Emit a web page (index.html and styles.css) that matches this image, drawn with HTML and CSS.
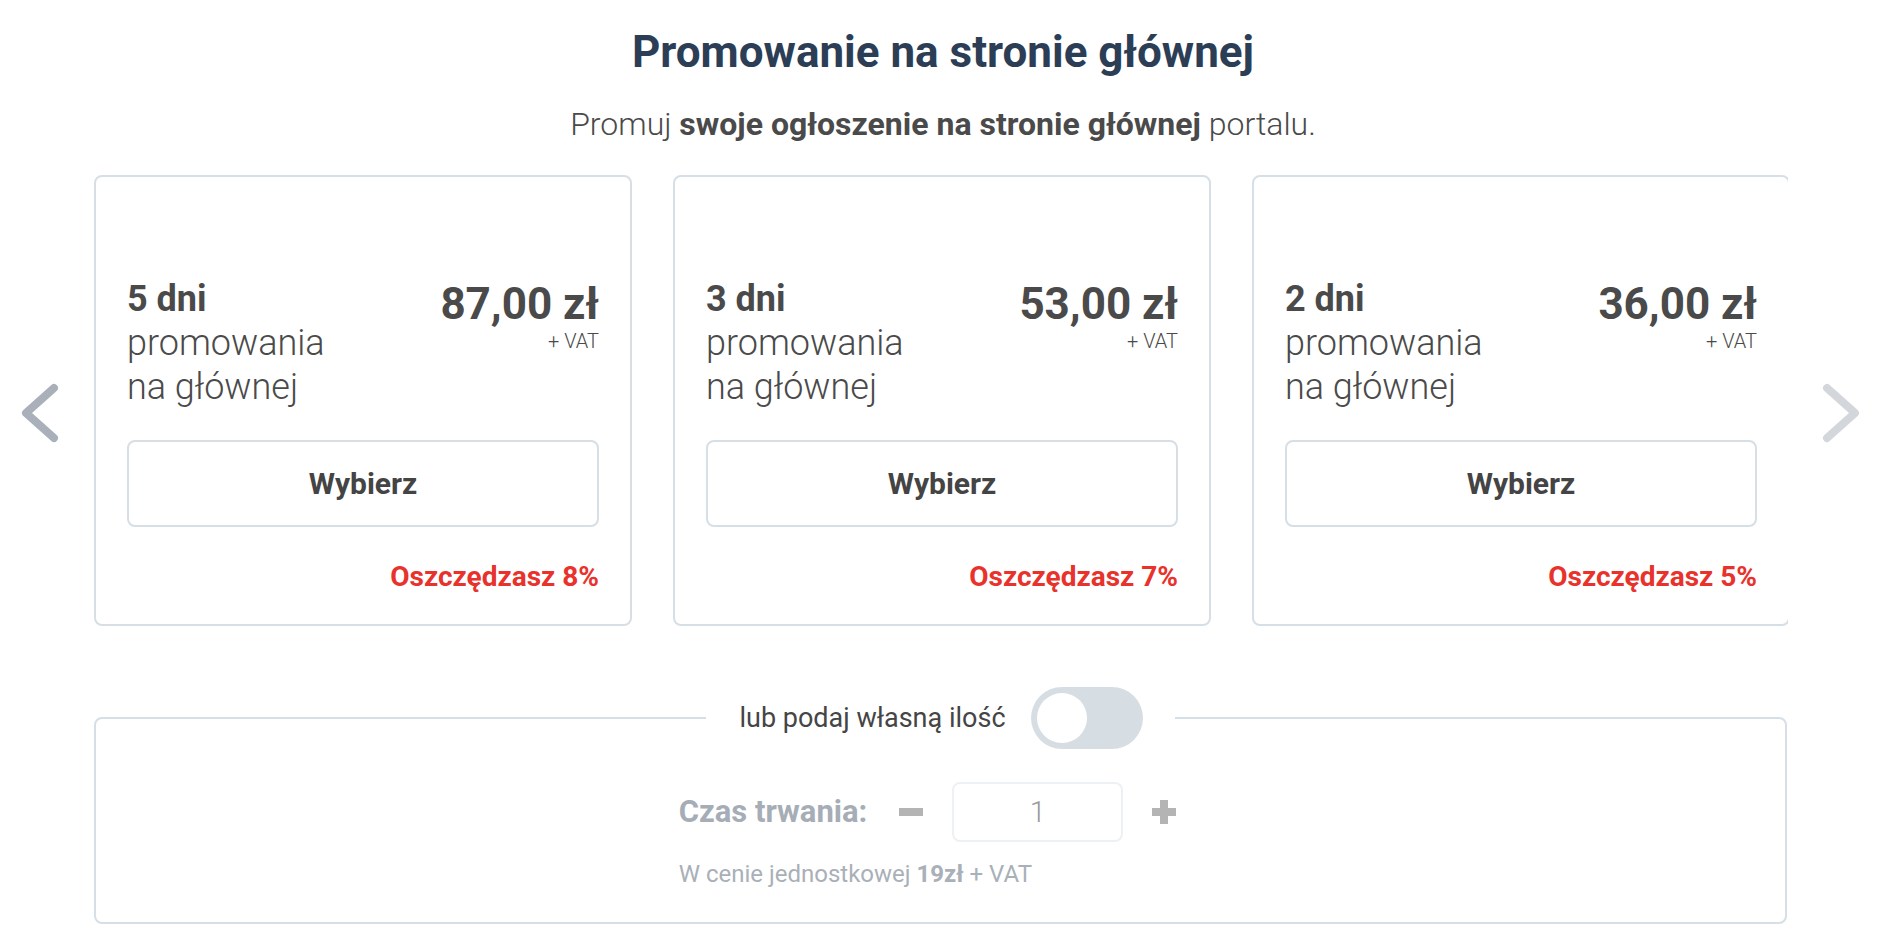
FILE: index.html
```html
<!DOCTYPE html>
<html lang="pl">
<head>
<meta charset="utf-8">
<title>Promowanie na stronie głównej</title>
<link rel="stylesheet" href="styles.css">
</head>
<body>
<main class="page">
  <h1 class="title">Promowanie na stronie głównej</h1>
  <p class="subtitle">Promuj <strong>swoje ogłoszenie na stronie głównej</strong> portalu.</p>

  <div class="carousel">
    <button class="arrow arrow-prev" type="button" aria-label="Poprzednie">
      <svg width="40" height="60" viewBox="0 0 40 60"><polyline points="34,5 6,30 34,55" fill="none" stroke="currentColor" stroke-width="8" stroke-linecap="round" stroke-linejoin="round"/></svg>
    </button>
    <div class="viewport">
      <div class="track">
        <div class="card">
          <div class="card-top">
            <div class="days"><strong>5 dni</strong><br>promowania<br>na głównej</div>
            <div class="price-box"><div class="price">87,00 zł</div><div class="vat">+ VAT</div></div>
          </div>
          <button class="choose" type="button">Wybierz</button>
          <div class="save">Oszczędzasz 8%</div>
        </div>
        <div class="card">
          <div class="card-top">
            <div class="days"><strong>3 dni</strong><br>promowania<br>na głównej</div>
            <div class="price-box"><div class="price">53,00 zł</div><div class="vat">+ VAT</div></div>
          </div>
          <button class="choose" type="button">Wybierz</button>
          <div class="save">Oszczędzasz 7%</div>
        </div>
        <div class="card">
          <div class="card-top">
            <div class="days"><strong>2 dni</strong><br>promowania<br>na głównej</div>
            <div class="price-box"><div class="price">36,00 zł</div><div class="vat">+ VAT</div></div>
          </div>
          <button class="choose" type="button">Wybierz</button>
          <div class="save">Oszczędzasz 5%</div>
        </div>
      </div>
    </div>
    <button class="arrow arrow-next" type="button" aria-label="Następne">
      <svg width="40" height="60" viewBox="0 0 40 60"><polyline points="6,5 34,30 6,55" fill="none" stroke="currentColor" stroke-width="8" stroke-linecap="round" stroke-linejoin="round"/></svg>
    </button>
  </div>

  <fieldset class="custom">
    <legend class="custom-legend">
      <span class="legend-text">lub podaj własną ilość</span>
      <span class="toggle"><span class="knob"></span></span>
    </legend>
    <div class="duration">
      <div class="duration-row">
        <span class="duration-label">Czas trwania:</span>
        <span class="minus"></span>
        <span class="qty">1</span>
        <span class="plus"></span>
      </div>
      <div class="unit-price">W cenie jednostkowej <strong>19zł</strong> + VAT</div>
    </div>
  </fieldset>
</main>
</body>
</html>
```

FILE: styles.css
```css
* { box-sizing: border-box; }

html, body {
  margin: 0;
  background: #ffffff;
}

body {
  font-family: Roboto, "Liberation Sans", Arial, sans-serif;
  color: #4a4a4a;
}

.page {
  width: 1886px;
  padding-top: 26px;
}

.title {
  margin: 0;
  text-align: center;
  font-size: 44px;
  line-height: 52px;
  font-weight: 700;
  color: #2c3e56;
}

.subtitle {
  margin: 27px 0 0;
  text-align: center;
  font-size: 32px;
  line-height: 38px;
  font-weight: 300;
  color: #4a4a4a;
}

.subtitle strong {
  font-weight: 700;
}

.carousel {
  display: flex;
  margin-top: 32px;
}

.arrow {
  flex: none;
  align-self: center;
  margin-top: 24px;
  padding: 0;
  border: 0;
  background: none;
  display: flex;
}

.arrow-prev {
  width: 94px;
  padding-left: 20px;
  color: #a9b0b9;
}

.arrow-next {
  width: 98px;
  padding-left: 33px;
  color: #d3d7dc;
}

.viewport {
  width: 1694px;
  flex: none;
  overflow: hidden;
}

.track {
  display: flex;
  gap: 41px;
}

.card {
  flex: 0 0 538px;
  border: 2px solid #d6dfe5;
  border-radius: 8px;
  padding: 100px 31px 31px;
  display: flex;
  flex-direction: column;
}

.card-top {
  display: flex;
  justify-content: space-between;
  align-items: flex-start;
}

.days {
  font-size: 36px;
  line-height: 44px;
  font-weight: 300;
  color: #4a4a4a;
}

.days strong {
  font-weight: 700;
}

.price-box {
  text-align: right;
}

.price {
  font-size: 44px;
  line-height: 54px;
  font-weight: 700;
  color: #4a4a4a;
}

.vat {
  font-size: 20px;
  line-height: 20px;
  font-weight: 300;
  color: #4a4a4a;
}

.choose {
  margin-top: 31px;
  height: 87px;
  width: 100%;
  border: 2px solid #d6dfe5;
  border-radius: 8px;
  background: #ffffff;
  font-family: inherit;
  font-size: 30px;
  font-weight: 700;
  color: #444444;
}

.save {
  margin-top: 34px;
  text-align: right;
  font-size: 28px;
  line-height: 32px;
  font-weight: 700;
  color: #e8322b;
}

.custom {
  margin: 61px 0 0 94px;
  width: 1693px;
  min-inline-size: 0;
  border: 2px solid #d6dfe5;
  border-radius: 8px;
  padding: 33px 0 34px;
}

.custom-legend {
  margin: 0 auto;
  padding: 0 32px 0 33px;
  display: flex;
  align-items: center;
  gap: 25px;
}

.legend-text {
  font-size: 27px;
  line-height: 32px;
  font-weight: 400;
  color: #454545;
}

.toggle {
  width: 112px;
  height: 62px;
  border-radius: 31px;
  background: #d6dee4;
  padding: 6px;
  display: flex;
}

.knob {
  width: 50px;
  height: 50px;
  border-radius: 50%;
  background: #ffffff;
}

.duration {
  display: flex;
  flex-direction: column;
  align-items: flex-start;
  width: max-content;
  margin: 0 auto;
  padding-right: 26px;
}

.duration-row {
  display: flex;
  align-items: center;
}

.duration-label {
  font-size: 31px;
  line-height: 36px;
  font-weight: 700;
  color: #a6adb6;
}

.minus {
  width: 24px;
  height: 8px;
  margin-left: 32px;
  background: #b4b4b4;
}

.qty {
  margin-left: 29px;
  width: 171px;
  height: 60px;
  border: 2px solid #eef1f4;
  border-radius: 8px;
  display: flex;
  align-items: center;
  justify-content: center;
  font-size: 29px;
  font-weight: 300;
  color: #9a9a9a;
}

.plus {
  margin-left: 29px;
  width: 24px;
  height: 24px;
  background:
    linear-gradient(#b4b4b4, #b4b4b4) center / 24px 8px no-repeat,
    linear-gradient(#b4b4b4, #b4b4b4) center / 8px 24px no-repeat;
}

.unit-price {
  margin-top: 18px;
  font-size: 24px;
  line-height: 28px;
  font-weight: 400;
  color: #a9b0b8;
}

.unit-price strong {
  font-weight: 700;
}
```
